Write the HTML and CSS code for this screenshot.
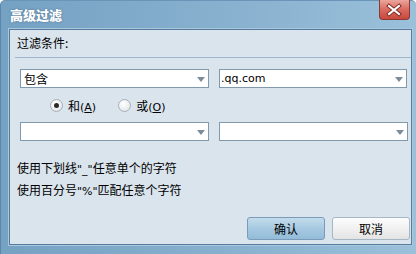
FILE: index.html
```
<!DOCTYPE html>
<html lang="zh-CN">
<head>
  <meta charset="UTF-8" />
  <title>高级过滤</title>
  <link rel="stylesheet" href="styles.css">
</head>
<body>
  <div class="window">
    <div class="titlebar">
      <span class="title">高级过滤</span>
      <span class="close">
        <svg width="30" height="20" viewBox="0 0 30 20">
          <path d="M10 6 L20 14 M20 6 L10 14" stroke="#7c2b24" stroke-width="4" stroke-linecap="square"/>
          <path d="M10 6 L20 14 M20 6 L10 14" stroke="#ffffff" stroke-width="2" stroke-linecap="square"/>
        </svg>
      </span>
    </div>

    <div class="client">
      <div class="caption">过滤条件:</div>

      <div class="group">
        <div class="row">
          <div class="combo"><span class="value">包含</span><span class="arrow"></span></div>
          <div class="combo edit"><span class="value latin">.qq.com</span><span class="arrow"></span></div>
        </div>
        <div class="radios">
          <label class="radio checked"><span class="dot"></span><span>和<span class="latin">(<u>A</u>)</span></span></label>
          <label class="radio"><span class="dot"></span><span>或<span class="latin">(<u>O</u>)</span></span></label>
        </div>
        <div class="row">
          <div class="combo"><span class="value"></span><span class="arrow"></span></div>
          <div class="combo edit wide"><span class="value"></span><span class="arrow"></span></div>
        </div>
      </div>

      <div class="hints">
        <p>使用下划线<span class="latin">"_"</span>任意单个的字符</p>
        <p>使用百分号<span class="latin">"%"</span>匹配任意个字符</p>
      </div>

      <div class="buttons">
        <button class="btn default">确认</button>
        <button class="btn">取消</button>
      </div>
    </div>
  </div>
</body>
</html>
```

FILE: styles.css
```
body {
  margin: 0;
  font-family: "Noto Sans CJK SC", "DejaVu Sans", sans-serif;
  font-size: 12px;
  color: #000000;
  background: #ffffff;
}
.window {
  width: 416px;
  height: 254px;
  box-sizing: border-box;
  padding: 0 4px 9px 8px;
  display: flex;
  flex-direction: column;
  background: linear-gradient(to right, #75a1c3, #88b1cf 55%, #9ac0da);
  border-left: 1px solid #5a86ab;
  border-top: 1px solid #6a95b8;
  border-radius: 5px 5px 0 0;
}
.titlebar {
  height: 28px;
  display: flex;
  justify-content: space-between;
  align-items: flex-start;
  padding-left: 1px;
}
.title {
  margin-top: 5px;
  color: #ffffff;
  font-size: 13px;
  font-weight: 900;
  line-height: 18px;
  text-shadow: 0 0 2px rgba(40, 70, 100, 0.6);
}
.close {
  width: 31px;
  height: 20px;
  margin-top: -1px;
  margin-right: 2px;
  box-sizing: border-box;
  border: 1px solid #8a3a34;
  border-top: none;
  border-radius: 0 0 4px 4px;
  background: linear-gradient(#eba59c, #d96a5f 50%, #c9483d);
  display: flex;
}
.close svg {
  margin-left: -1px;
}
.client {
  flex: 1;
  display: flex;
  flex-direction: column;
  background: #dae4ed;
  border: 1px solid #567b9d;
  box-shadow: 0 0 0 1px #a9c7dd;
}
.caption {
  height: 27px;
  line-height: 25px;
  padding-left: 7px;
}
.group {
  margin-left: 5px;
  border-top: 1px solid #9db6cb;
  padding: 11px 0 0 5px;
}
.row {
  display: grid;
  grid-template-columns: 189px 188px;
  column-gap: 10px;
}
.combo {
  height: 19px;
  box-sizing: border-box;
  border: 1px solid #8199ad;
  background: #ffffff;
  display: flex;
  align-items: center;
  justify-content: space-between;
  padding: 0 3px 0 3px;
}
.combo.edit {
  padding-left: 1px;
}
.combo.wide {
  width: 189px;
}
.value {
  line-height: 17px;
}
.latin {
  font-family: "DejaVu Sans", sans-serif;
  font-size: 11px;
}
.arrow {
  width: 0;
  height: 0;
  border-left: 4px solid transparent;
  border-right: 4px solid transparent;
  border-top: 5px solid #7d8c99;
  margin-top: 1px;
}
.radios {
  height: 34px;
  box-sizing: border-box;
  padding: 1px 0 0 30px;
  display: flex;
  align-items: center;
  gap: 22px;
}
.radio {
  display: flex;
  align-items: center;
  gap: 5px;
}
.radio u {
  text-decoration-thickness: 1px;
}
.dot {
  width: 13px;
  height: 13px;
  box-sizing: border-box;
  border-radius: 50%;
  border: 1px solid #a7afb7;
  background: radial-gradient(circle at 40% 35%, #ffffff, #e6e9ec 70%, #d5dade);
  display: flex;
  align-items: center;
  justify-content: center;
}
.radio.checked .dot::after {
  content: "";
  width: 5px;
  height: 5px;
  border-radius: 50%;
  background: #2a2a2a;
}
.hints {
  margin-top: 17px;
  padding-left: 7px;
}
.hints p {
  margin: 0;
  line-height: 20px;
}
.buttons {
  margin-top: auto;
  padding: 0 1px 4px 0;
  display: flex;
  justify-content: flex-end;
  gap: 7px;
}
.btn {
  width: 78px;
  height: 23px;
  box-sizing: border-box;
  border: 1px solid #a6b6c4;
  border-radius: 3px;
  background: linear-gradient(#fdfdfd, #f1f1f1 50%, #e3e3e3);
  font-family: "Noto Sans CJK SC", sans-serif;
  font-size: 12px;
  color: #000000;
  padding: 0;
}
.btn.default {
  border-color: #7a9cba;
  background: linear-gradient(#c3dcec, #a6c9e1 50%, #93bcd9);
}
```
